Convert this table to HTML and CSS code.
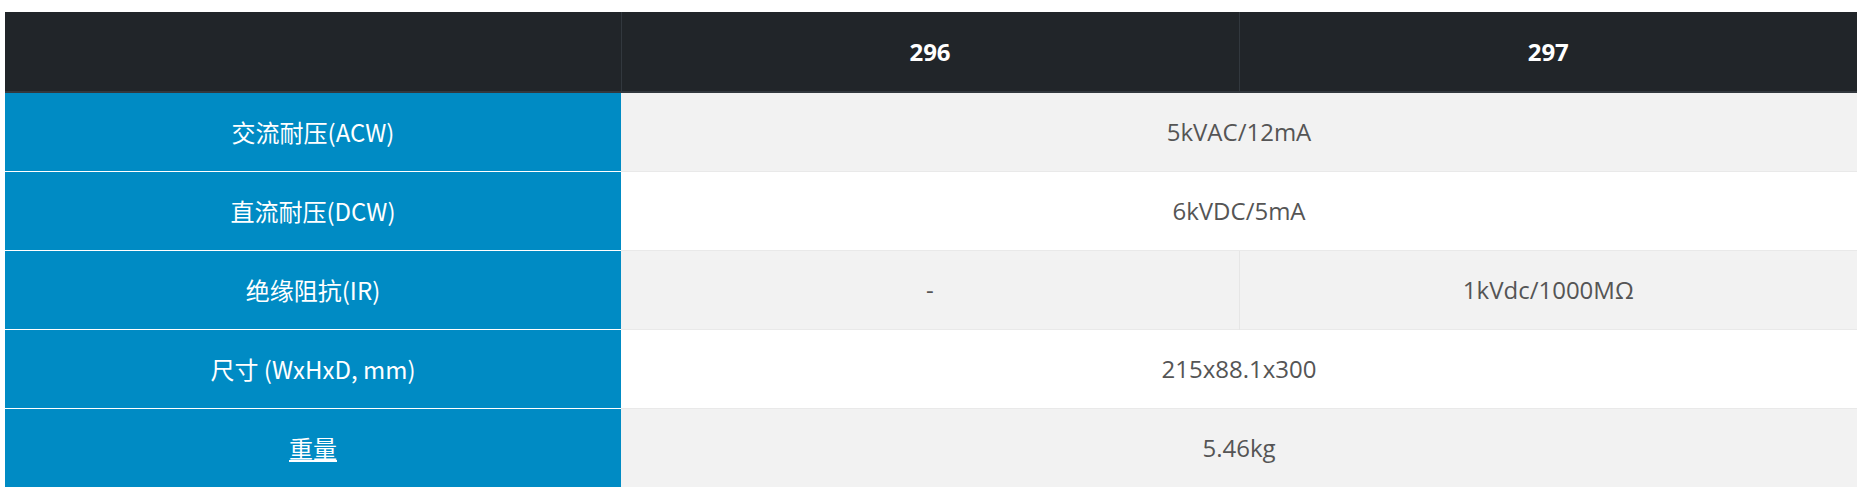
FILE: index.html
```html
<!DOCTYPE html>
<html lang="zh-CN">
<head>
	<meta charset="UTF-8" />
	<meta name="viewport" content="width=device-width, initial-scale=1" />

	<title>296 / 297 规格</title>

	<link rel="stylesheet" href="styles.css">
</head>
<body>
	<table class="spec">
		<colgroup>
			<col class="col_name" />
			<col class="col_model" />
			<col class="col_model" />
		</colgroup>
		<thead>
			<tr>
				<th></th>
				<th>296</th>
				<th>297</th>
			</tr>
		</thead>
		<tbody>
			<tr>
				<th>交流耐压(ACW)</th>
				<td colspan="2">5kVAC/12mA</td>
			</tr>
			<tr>
				<th>直流耐压(DCW)</th>
				<td colspan="2">6kVDC/5mA</td>
			</tr>
			<tr>
				<th>绝缘阻抗(IR)</th>
				<td>-</td>
				<td>1kVdc/1000MΩ</td>
			</tr>
			<tr>
				<th>尺寸 (WxHxD, mm)</th>
				<td colspan="2">215x88.1x300</td>
			</tr>
			<tr>
				<th><a href="#">重量</a></th>
				<td colspan="2">5.46kg</td>
			</tr>
		</tbody>
	</table>
</body>
</html>
```

FILE: styles.css
```css
body{
	margin: 12px 12px 0 5px;
	background-color: #fff;
	font-family: "Open Sans", "Noto Sans CJK SC", sans-serif;
}

.spec{
	width: 1852px;
	border-collapse: collapse;
	table-layout: fixed;
	font-size: 24px;
	line-height: 36px;
	text-align: center;
	color: #555;
}

.col_name{
	width: 616px;
}

.spec thead th{
	height: 79px;
	padding: 0;
	background-color: #212529;
	color: #fff;
	font-weight: 700;
	border-left: 1px solid #32383e;
	border-bottom: 2px solid #32383e;
}

.spec thead th:first-child{
	border-left: 0;
}

.spec tbody th,
.spec tbody td{
	height: 78px;
	padding: 0;
	border-top: 1px solid #e9e9e9;
	font-weight: 400;
}

.spec tbody tr:first-child th,
.spec tbody tr:first-child td{
	border-top: 0;
}

.spec tbody th{
	background-color: #008bc4;
	color: #fff;
	border-top-color: #fff;
	font-family: "Noto Sans CJK SC", sans-serif;
}

.spec tbody tr:nth-child(odd) td{
	background-color: #f2f2f2;
}

.spec tbody td + td{
	border-left: 1px solid #e6e6e6;
}

.spec a{
	color: #fff;
	text-decoration: underline;
}
```
